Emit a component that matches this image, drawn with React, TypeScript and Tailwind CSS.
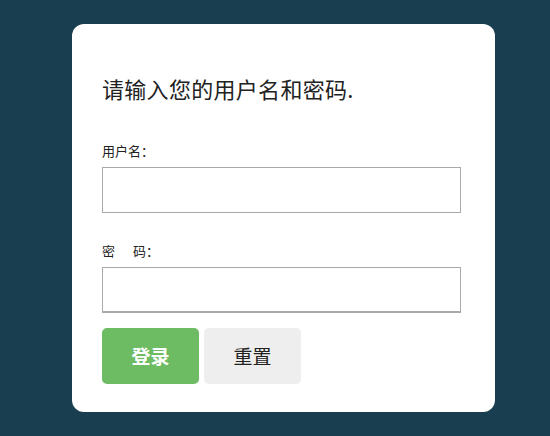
import React from "react";

function App() {
  return (
    <div
      className="w-[550px] h-[436px] bg-[#183e50] pt-[24px] pl-[72px]"
      style={{ fontFamily: '"Microsoft YaHei", "Noto Sans CJK SC", sans-serif' }}
    >
      {/* Login card */}
      <div className="w-[423px] h-[388px] bg-white rounded-[12px] pl-[30px] pt-[49px]">
        <div className="text-[22px] leading-[30px] text-[#222] tracking-[0.3px]">请输入您的用户名和密码.</div>

        <div className="mt-[39px] text-[13px] leading-[18px] text-[#222]">用户名：</div>
        <input
          type="text"
          className="mt-[7px] block w-[359px] h-[46px] border border-[#a9a9a9] bg-white outline-none"
        />

        <div className="mt-[29px] text-[13px] leading-[18px] text-[#222]">
          密<span className="inline-block w-[18px]"></span>码：
        </div>
        <input
          type="password"
          className="mt-[7px] block w-[359px] h-[46px] border border-[#a9a9a9] border-b-2 bg-white outline-none"
        />

        <div className="mt-[15px] flex gap-[5px]">
          <button className="w-[97px] h-[56px] rounded-[5px] bg-[#6dbb63] text-white text-[19px] font-bold">
            登录
          </button>
          <button className="w-[97px] h-[56px] rounded-[5px] bg-[#eeeeee] text-[#222] text-[19px]">
            重置
          </button>
        </div>
      </div>
    </div>
  );
}

export default App;
